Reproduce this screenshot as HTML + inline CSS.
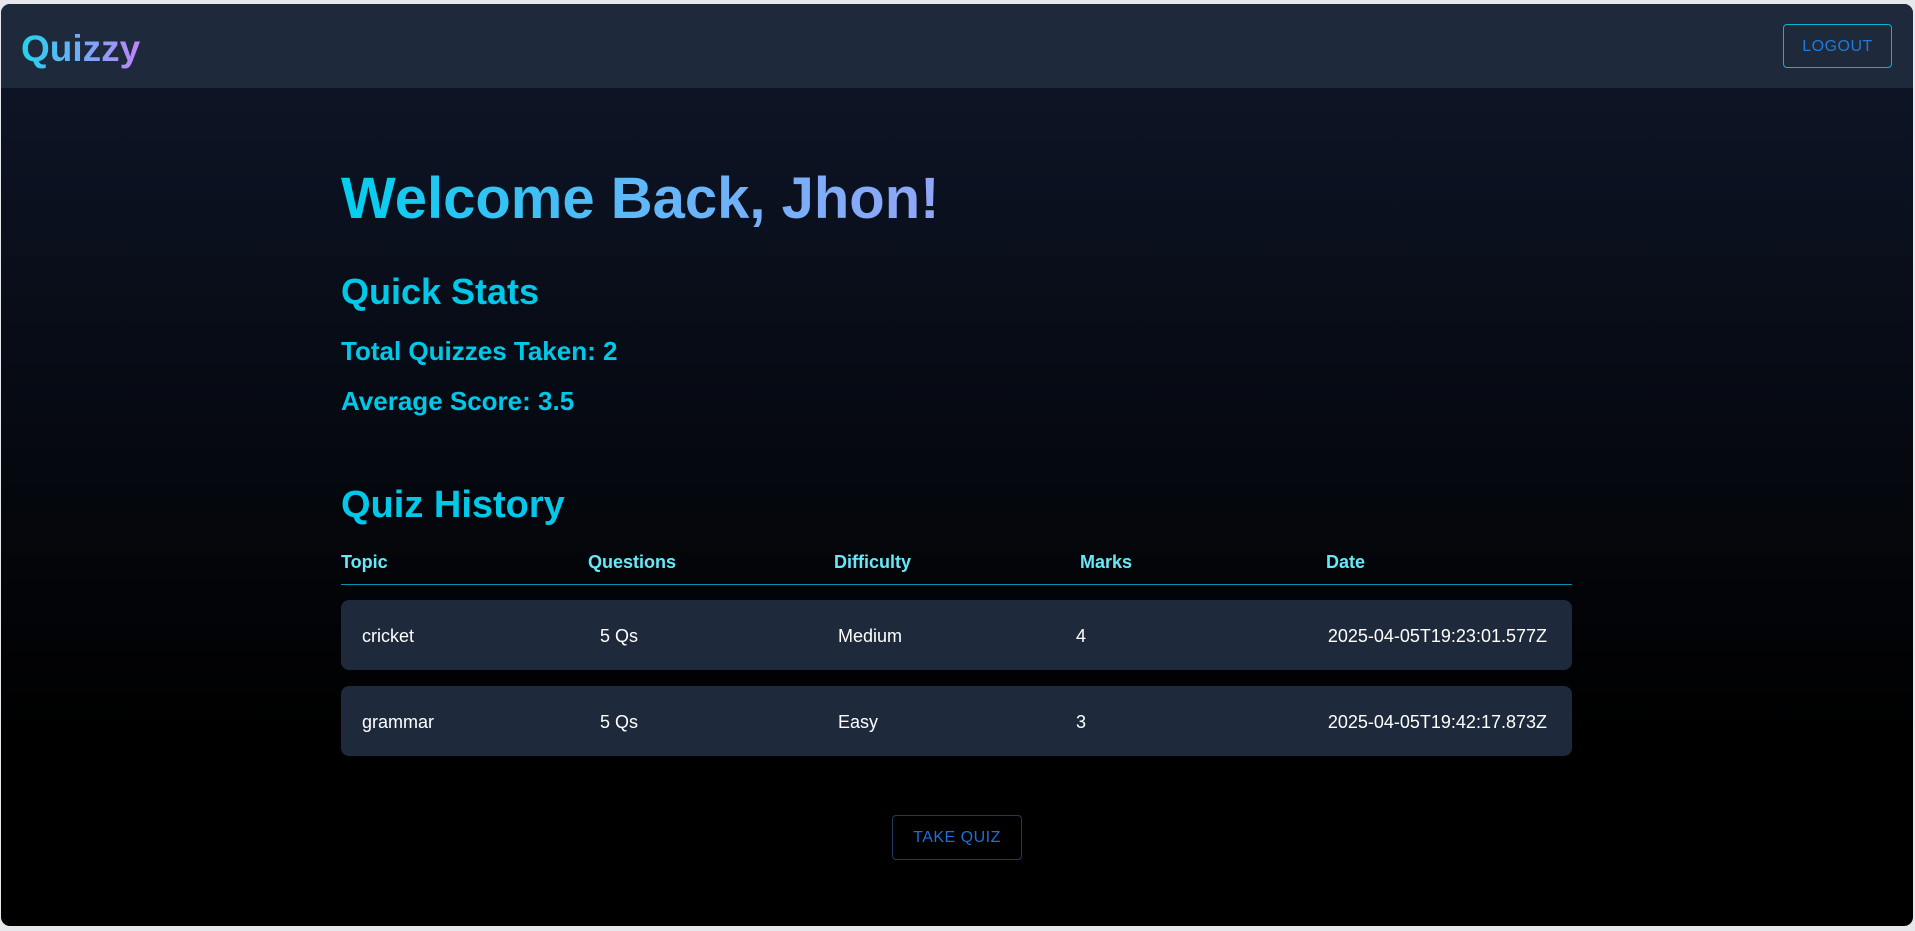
<!DOCTYPE html>
<html><head><meta charset="utf-8"><style>
*{margin:0;padding:0;box-sizing:border-box}
html,body{width:1915px;height:931px;background:#e5e7eb;overflow:hidden;font-family:"Liberation Sans",sans-serif}
.frame{position:absolute;left:1px;top:4px;width:1912px;height:922px;border-radius:9px;overflow:hidden;background:linear-gradient(#0f172a 0%,#05080f 50%,#000 80%)}
.hdr{position:absolute;left:0;top:0;width:100%;height:84px;background:#1e293b}
.logo{position:absolute;left:20px;top:24px;font-size:37px;font-weight:bold;background:linear-gradient(90deg,#22d3ee,#c084fc);-webkit-background-clip:text;background-clip:text;color:transparent}
.logout{position:absolute;left:1782px;top:20px;width:109px;height:44px;border:1px solid #06b6d4;border-radius:4px;color:#1e7bd8;font-size:16px;display:flex;align-items:center;justify-content:center;letter-spacing:.5px;padding-top:2px}
.abs{position:absolute;white-space:nowrap}
.welcome{left:340px;top:161px;font-size:58px;font-weight:bold;background:linear-gradient(90deg,#00cfef,#60b8f8 50%,#93a5f8);-webkit-background-clip:text;background-clip:text;color:transparent}
.h2{color:#00c8e8;font-weight:bold}
.stat{color:#00c8e8;font-size:26px;font-weight:bold}
.th{color:#67e8f9;font-size:18px;font-weight:bold;top:548px}
.line{position:absolute;left:340px;top:580px;width:1231px;height:1px;background:#0891b2}
.row{position:absolute;left:340px;width:1231px;height:70px;border-radius:8px;background:#1e293b}
.td{color:#fff;font-size:18px}
.take{position:absolute;left:891px;top:811px;width:130px;height:45px;border:1px solid #1e3a5f;border-radius:4px;color:#1e6fd9;font-size:16px;display:flex;align-items:center;justify-content:center;letter-spacing:.5px}
</style></head><body>
<div class="frame">
<div class="hdr"><div class="logo">Quizzy</div><div class="logout">LOGOUT</div></div>
<div class="abs welcome">Welcome Back, Jhon!</div>
<div class="abs h2" style="left:340px;top:267px;font-size:36px">Quick Stats</div>
<div class="abs stat" style="left:340px;top:332px">Total Quizzes Taken: 2</div>
<div class="abs stat" style="left:340px;top:382px">Average Score: 3.5</div>
<div class="abs h2" style="left:340px;top:480px;font-size:38px">Quiz History</div>
<div class="abs th" style="left:340px">Topic</div>
<div class="abs th" style="left:587px">Questions</div>
<div class="abs th" style="left:833px">Difficulty</div>
<div class="abs th" style="left:1079px">Marks</div>
<div class="abs th" style="left:1325px">Date</div>
<div class="line"></div>
<div class="row" style="top:596px"></div>
<div class="row" style="top:682px"></div>
<div class="abs td" style="left:361px;top:622px">cricket</div>
<div class="abs td" style="left:599px;top:622px">5 Qs</div>
<div class="abs td" style="left:837px;top:622px">Medium</div>
<div class="abs td" style="left:1075px;top:622px">4</div>
<div class="abs td" style="right:366px;top:622px">2025-04-05T19:23:01.577Z</div>
<div class="abs td" style="left:361px;top:708px">grammar</div>
<div class="abs td" style="left:599px;top:708px">5 Qs</div>
<div class="abs td" style="left:837px;top:708px">Easy</div>
<div class="abs td" style="left:1075px;top:708px">3</div>
<div class="abs td" style="right:366px;top:708px">2025-04-05T19:42:17.873Z</div>
<div class="take">TAKE QUIZ</div>
</div>
</body></html>
